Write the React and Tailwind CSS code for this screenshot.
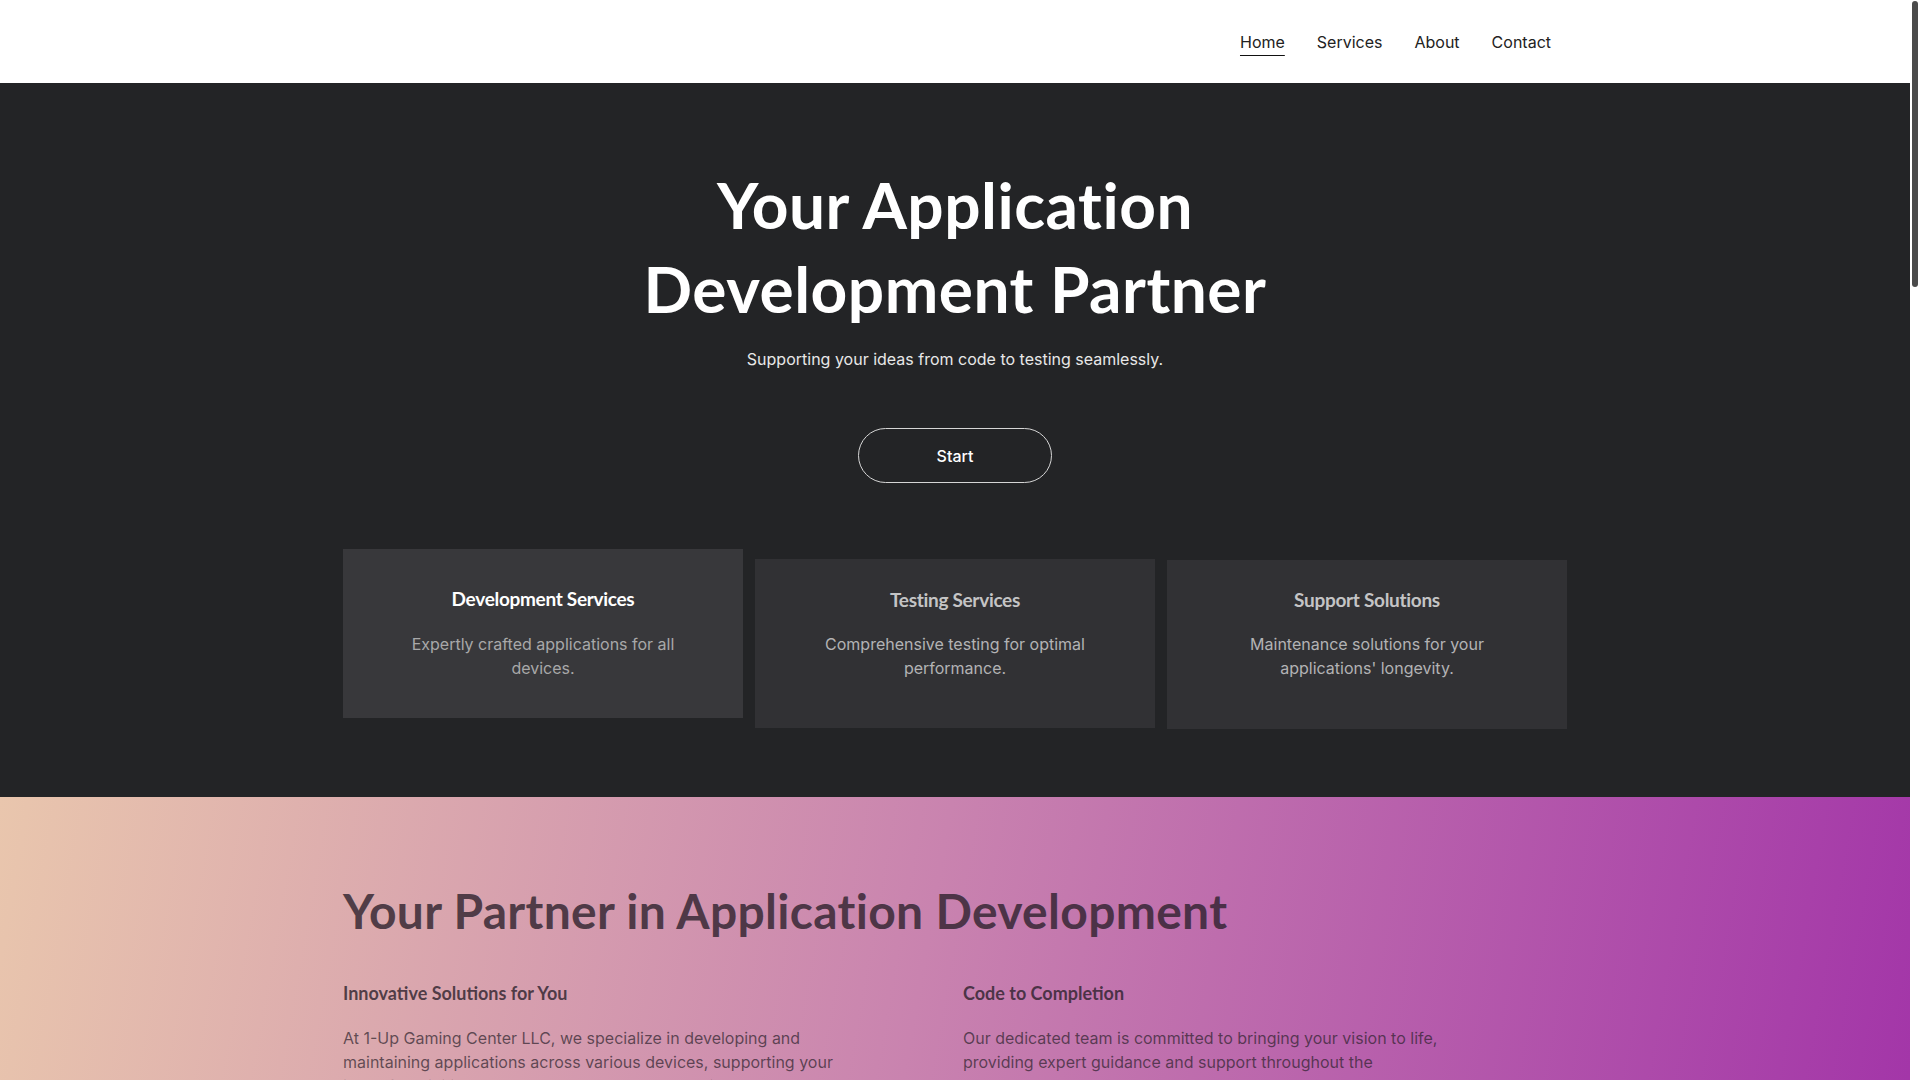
export default function App() {
  const head = { fontFamily: "Lato, 'Noto Sans', sans-serif" };
  return (
    <div className="min-h-screen bg-white" style={{ fontFamily: "Inter, 'Noto Sans', sans-serif" }}>
      <div className="mr-[10px]">
        <header className="h-[83px] bg-white">
          <div className="mx-auto flex h-full max-w-[1224px] items-center justify-end px-4">
            <nav className="flex items-center gap-8 text-base text-[#222222]">
              <a className="leading-6 underline decoration-[#111111] decoration-1 underline-offset-[7px]" href="#">Home</a>
              <a className="leading-6" href="#">Services</a>
              <a className="leading-6" href="#">About</a>
              <a className="leading-6" href="#">Contact</a>
            </nav>
          </div>
        </header>

        <section className="bg-[#232426] pb-[79px] pt-[80px]">
          <div className="mx-auto max-w-[1224px] text-center">
            <h1 className="text-[64px] font-bold leading-[84px] tracking-[0.5px] text-white" style={head}>
              Your Application
              <br />
              Development Partner
            </h1>
            <p className="mt-4 text-base leading-6 text-[#e8e8e8]">
              Supporting your ideas from code to testing seamlessly.
            </p>
            <button className="mt-[57px] h-[55px] w-[194px] rounded-full border border-[#d6d6d6] text-base font-medium text-white">
              Start
            </button>
            <div className="mt-[66px] grid grid-cols-3 items-start gap-3">
              <div className="h-[169px] bg-[#38383b] px-12 pt-9">
                <h3 className="text-[19px] font-bold leading-7 tracking-[-0.3px] text-white" style={head}>Development Services</h3>
                <p className="mt-[19px] text-base leading-6 text-[#a8a8a9]">
                  Expertly crafted applications for all devices.
                </p>
              </div>
              <div className="-mb-[10px] mt-[10px] h-[169px] bg-[#313134] px-12 pt-[27px]">
                <h3 className="text-[19px] font-bold leading-7 tracking-[-0.3px] text-[#c4c4c5]" style={head}>Testing Services</h3>
                <p className="mt-[18px] text-base leading-6 text-[#b3b3b4]">
                  Comprehensive testing for optimal performance.
                </p>
              </div>
              <div className="-mb-[11px] mt-[11px] h-[169px] bg-[#313134] px-12 pt-[26px]">
                <h3 className="text-[19px] font-bold leading-7 tracking-[-0.3px] text-[#c4c4c5]" style={head}>Support Solutions</h3>
                <p className="mt-[18px] text-base leading-6 text-[#b3b3b4]">
                  Maintenance solutions for your applications' longevity.
                </p>
              </div>
            </div>
          </div>
        </section>

        <section className="bg-[linear-gradient(100deg,#e9c6ad_0%,#c983af_48%,#a234a8_100%)] pb-[120px] pt-[85px]">
          <div className="mx-auto max-w-[1224px]">
            <h2 className="text-[48px] font-bold leading-[58px] tracking-[0.3px] text-[#2b1f2b]/80" style={head}>
              Your Partner in Application Development
            </h2>
            <div className="mt-10 grid grid-cols-2 gap-4">
              <div>
                <h4 className="text-[18px] font-bold leading-[26px] text-[#2b1f2b]/80" style={head}>Innovative Solutions for You</h4>
                <p className="mt-5 max-w-[498px] text-base leading-6 text-[#2b1f2b]/70">
                  At 1-Up Gaming Center LLC, we specialize in developing and maintaining applications across various devices, supporting your ideas from initial code all the way through to testing.
                </p>
              </div>
              <div>
                <h4 className="text-[18px] font-bold leading-[26px] text-[#2b1f2b]/80" style={head}>Code to Completion</h4>
                <p className="mt-5 max-w-[498px] text-base leading-6 text-[#2b1f2b]/70">
                  Our dedicated team is committed to bringing your vision to life, providing expert guidance and support throughout the development process and beyond.
                </p>
              </div>
            </div>
          </div>
        </section>
      </div>

      <div className="fixed right-0 top-0 h-screen w-[10px] bg-white">
        <div className="mx-auto mt-[1px] h-[286px] w-[6px] rounded-full bg-[#4b4b4b]" />
      </div>
    </div>
  );
}
